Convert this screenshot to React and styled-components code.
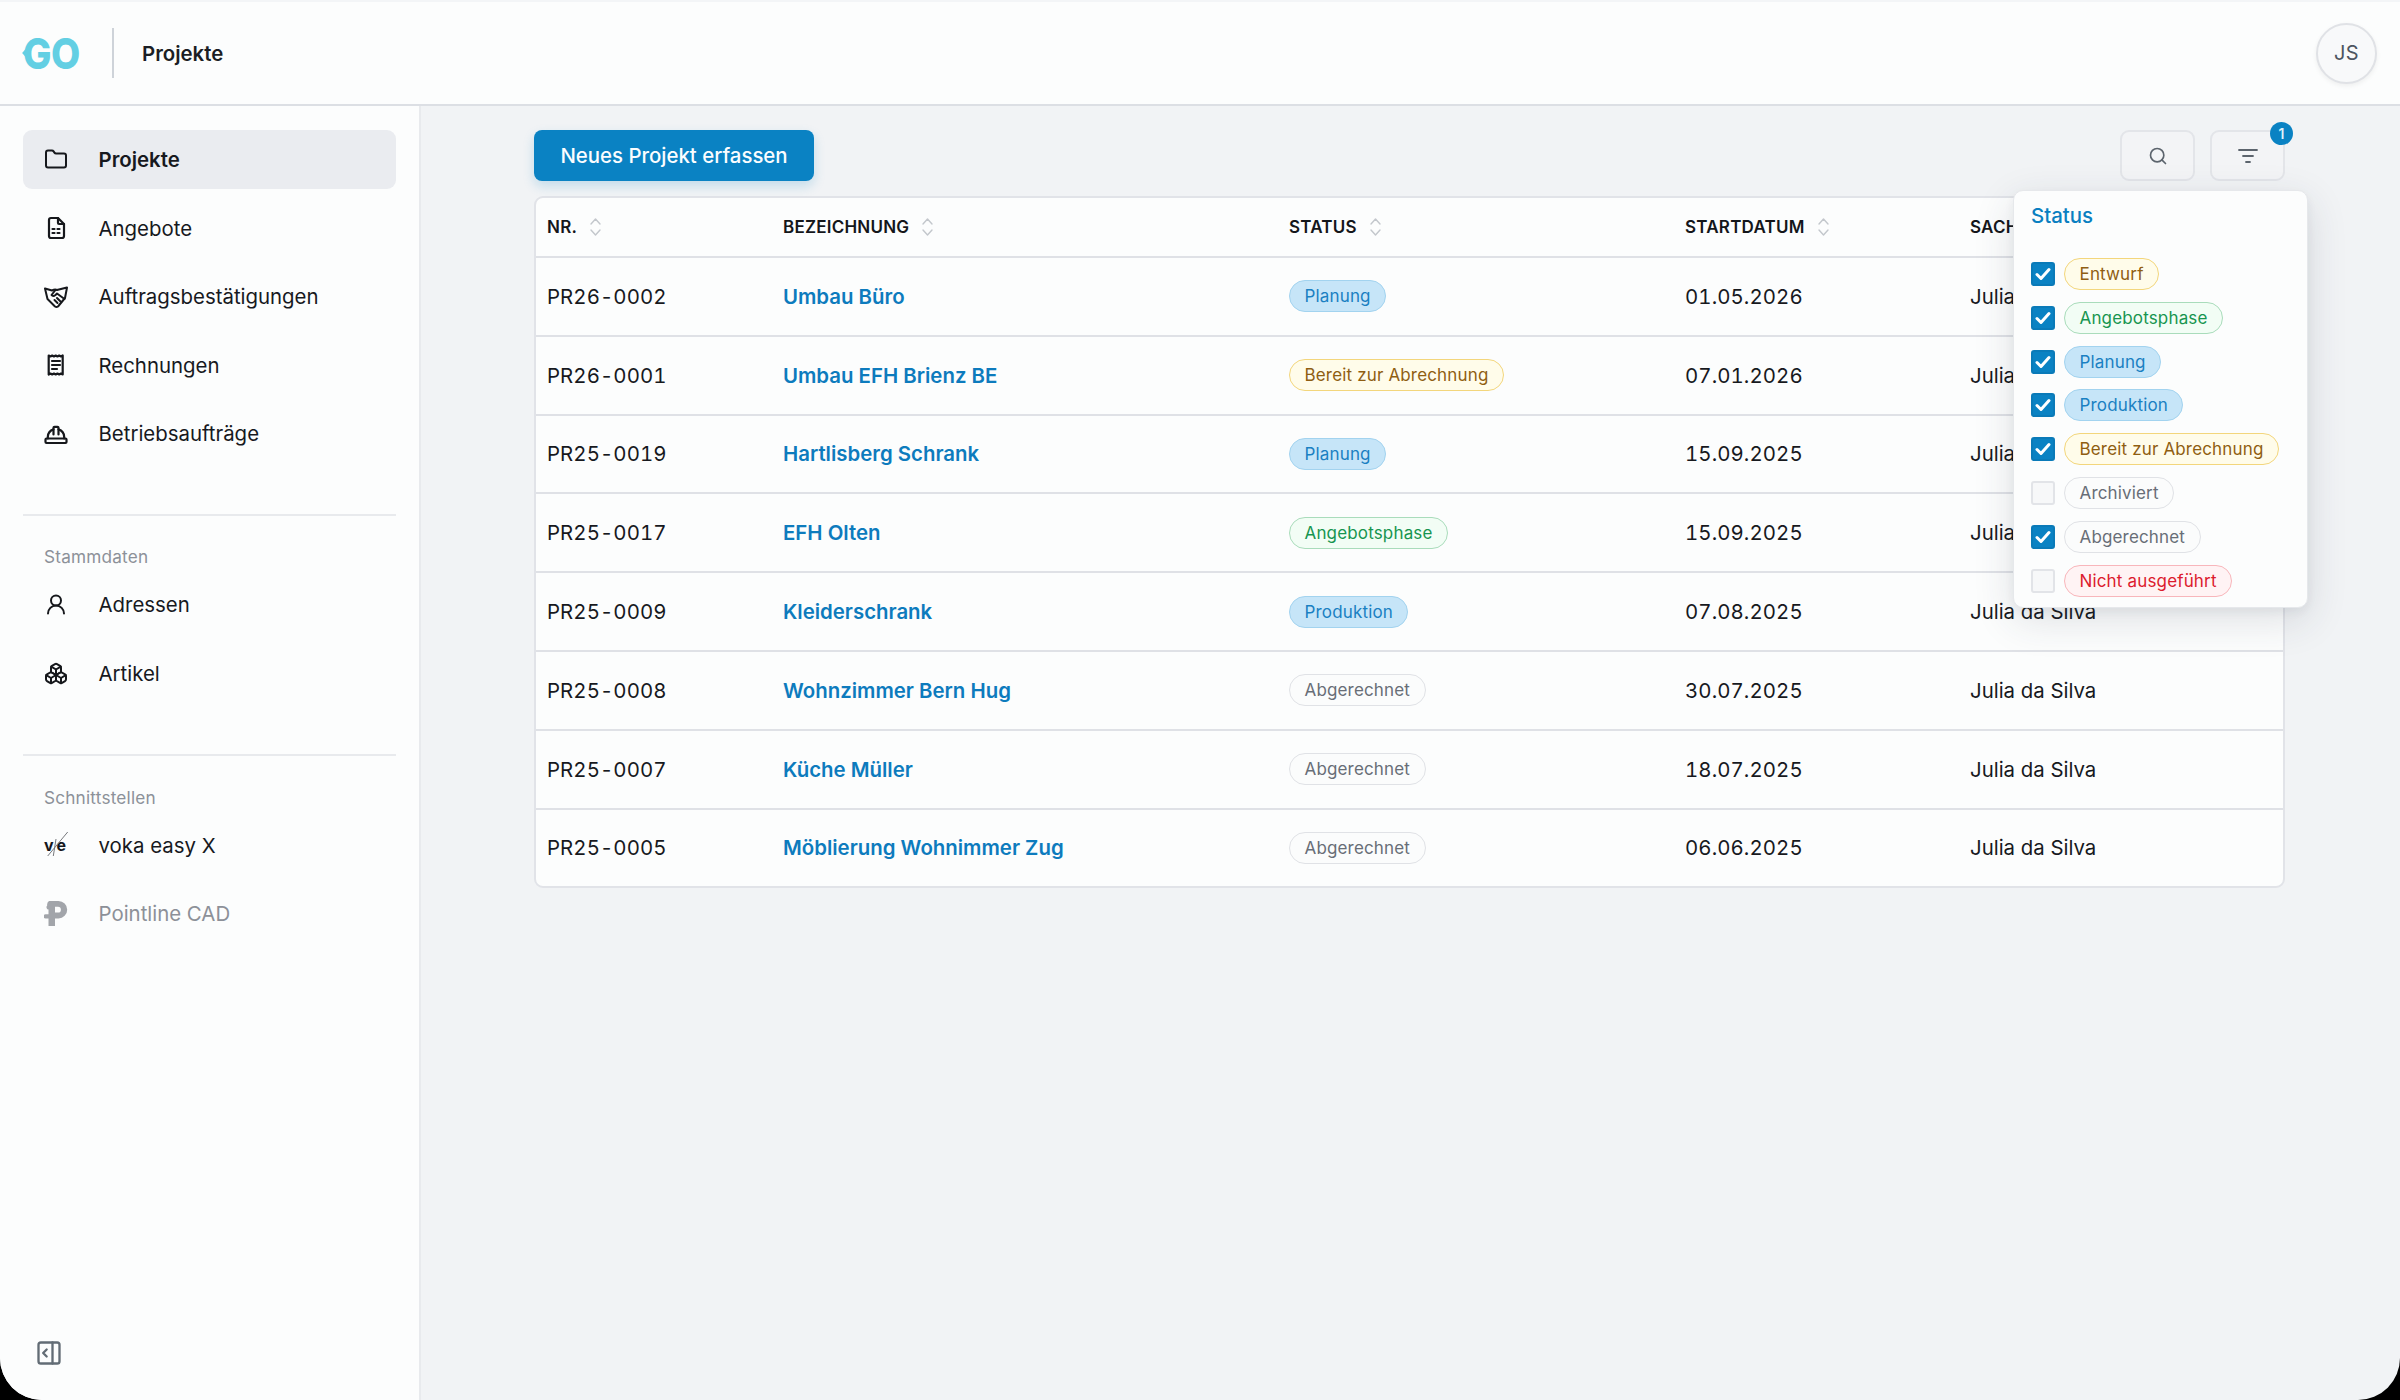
import React from 'react';
import styled, { createGlobalStyle } from 'styled-components';
import { Folder, Boxes, UserRound, Search, PanelRightOpen } from 'lucide-react';

const Global = createGlobalStyle`
  html, body { margin: 0; padding: 0; background: #000; }
  body { font-family: Inter, "Noto Sans", sans-serif; color: #111318; }
  * { box-sizing: border-box; }
`;

const Shell = styled.div`
  width: 2400px; height: 1400px; background: #f1f3f5;
  border-radius: 0 0 42px 42px; overflow: hidden;
  display: flex; flex-direction: column;
`;
const Header = styled.header`
  height: 106px; flex: none; background: #fcfdfd;
  border-top: 2px solid #f3f5f7; border-bottom: 2px solid #dcdfe4;
  display: flex; align-items: center; padding: 0 23px 0 23px;
`;
const Logo = styled.div`
  position: relative; width: 60px; font-size: 43px; line-height: 43px; font-weight: 800;
  letter-spacing: -.4px; color: #63cfe3; white-space: nowrap;
  transform: scaleX(.88); transform-origin: left center;
`;
const LogoNotch = styled.span`
  position: absolute; left: -1px; top: 17px; width: 0; height: 0;
  border-top: 4px solid transparent; border-bottom: 4px solid transparent; border-right: 4px solid #63cfe3;
`;
const HeaderRule = styled.div`
  width: 2px; height: 50px; background: #ced3d9; margin: 0 28px 0 29px;
`;
const HeaderTitle = styled.div`
  font-size: 20.4px; font-weight: 600; color: #1b1e24; flex: 1;
`;
const Avatar = styled.div`
  width: 61px; height: 61px; border-radius: 50%; background: #f8f9fa; border: 2px solid #e0e2e6;
  box-shadow: 0 2px 5px rgba(0,0,0,.06);
  display: flex; align-items: center; justify-content: center; font-size: 20px; color: #4d5560; letter-spacing: .5px;
`;
const Body = styled.div`
  flex: 1; display: flex; min-height: 0;
`;
const Sidebar = styled.aside`
  width: 421px; flex: none; background: #fcfdfd; border-right: 2px solid #e8eaed;
  padding: 24px 23px 0; display: flex; flex-direction: column;
`;
const NavList = styled.nav`
  display: flex; flex-direction: column; gap: 9.5px;
`;
const NavItem = styled.div`
  height: 59px; display: flex; align-items: center; padding-left: 21px; gap: 30.5px;
  border-radius: 9px; background: ${p => (p.$active ? '#eaecf0' : 'transparent')};
  font-size: 20.4px; font-weight: ${p => (p.$active ? 600 : 400)};
  color: ${p => (p.$muted ? '#8c9098' : '#17191e')};
`;
const NavIcon = styled.span`
  width: 24px; height: 24px; flex: none; display: flex; align-items: center; justify-content: center;
  color: ${p => (p.$muted ? '#a2a5aa' : '#16181c')};
`;
const VokaMark = styled.span`
  position: relative; width: 24px; height: 24px; padding-right: 2px; display: flex; align-items: center; justify-content: space-between;
  font-size: 16px; font-weight: 700; line-height: 24px; color: #16181c;
`;
const VokaSlash = styled.svg`
  position: absolute; left: 2px; top: -1px; width: 22px; height: 26px; overflow: visible;
`;
const Rule = styled.div`
  height: 2px; background: #e8eaed; margin-top: ${p => p.$top}px;
`;
const SectionLabel = styled.div`
  margin: ${p => p.$top}px 0 0 21px; font-size: 17.2px; line-height: 24px; color: #8c9199; letter-spacing: .2px; height: 30px;
`;
const Spacer = styled.div`flex: 1;`;
const Collapse = styled.div`
  padding: 0 0 33px 12px; display: flex; color: #626c75;
`;
const Main = styled.main`
  flex: 1; padding: 24px 115px 0 113px; min-width: 0;
`;
const Toolbar = styled.div`
  position: relative; display: flex; align-items: flex-start; height: 66px;
`;
const PrimaryButton = styled.button`
  height: 51px; width: 280px; border: none; border-radius: 8px; background: #0a82c3; color: #fbfdff;
  font: 500 20.4px Inter, sans-serif; box-shadow: 0 5px 12px rgba(10,130,195,.2);
`;
const ToolGroup = styled.div`
  margin-left: auto; display: flex; gap: 15px;
`;
const IconButton = styled.div`
  position: relative; width: 75px; height: 51px; border-radius: 9px; background: #f3f4f6; border: 2px solid #e3e5e9;
  display: flex; align-items: center; justify-content: center; color: #5c646d;
`;
const CountBadge = styled.span`
  position: absolute; right: -10px; top: -10px; width: 23px; height: 23px; border-radius: 50%;
  background: #0a82c3; color: #dff1fb; font-size: 14px; font-weight: 600;
  display: flex; align-items: center; justify-content: center;
`;
const Popover = styled.div`
  position: absolute; left: 1479px; top: 60px; width: 295px; height: 418px; z-index: 5;
  background: #fcfdfd; border: 1px solid #e6e8eb; border-radius: 10px;
  box-shadow: 0 12px 40px rgba(40,50,70,.14), 0 4px 10px rgba(40,50,70,.06);
  padding: 11px 16px 0 17px;
`;
const PopoverTitle = styled.div`
  font-size: 20.4px; line-height: 28px; font-weight: 500; color: #0a7fc1; margin-bottom: 28px;
`;
const CheckList = styled.div`
  display: flex; flex-direction: column; gap: 11.8px;
`;
const CheckRow = styled.div`
  height: 32px; display: flex; align-items: center; gap: 9px;
`;
const Box = styled.span`
  width: 24px; height: 24px; flex: none; border-radius: 3px;
  background: ${p => (p.$on ? '#0a82c3' : '#f7f8f9')}; border: 2px solid ${p => (p.$on ? '#0a7ab8' : '#e2e4e8')};
  display: flex; align-items: center; justify-content: center;
`;
const tones = {
  yellow: ['#fffcea', '#f3d67c', '#8f5e12'],
  green: ['#f2fdf5', '#a9dcbb', '#179550'],
  blue: ['#c6e5f8', '#a2d3ef', '#1a80c2'],
  gray: ['#fbfcfc', '#e0e2e6', '#686e77'],
  red: ['#fff3f4', '#f8b6bb', '#dc1b2e'],
};
const Pill = styled.span`
  height: 32px; display: inline-flex; align-items: center; padding: 0 14.5px; border-radius: 16px; white-space: nowrap;
  font-size: 17px; letter-spacing: .16px; border: 1.5px solid ${p => tones[p.$tone][1]};
  background: ${p => tones[p.$tone][0]}; color: ${p => tones[p.$tone][2]};
`;
const Table = styled.div`
  background: #fcfdfd; border: 2px solid #e1e3e8; border-radius: 9px; overflow: hidden;
`;
const columns = '236px 506px 396px 285px 1fr';
const HeadRow = styled.div`
  display: grid; grid-template-columns: ${columns}; height: 58px; align-items: center; padding-left: 11px;
  font-size: 17px; font-weight: 600; letter-spacing: .22px; color: #14161a; text-transform: uppercase;
`;
const HeadCell = styled.div`
  display: flex; align-items: center; gap: 12px; white-space: nowrap;
`;
const Row = styled.div`
  display: grid; grid-template-columns: ${columns}; height: 78.8px; align-items: center; padding-left: 11px;
  border-top: 2px solid #dfe1e6; font-size: 20.4px; color: #17191e;
`;
const Mono = styled.div`
  letter-spacing: .1px; font-variant-numeric: tabular-nums;
`;
const NameLink = styled.a`
  font-weight: 600; color: #0d7bbd;
`;
const Cell = styled.div`white-space: nowrap;`;

const Line = ({ children, w = 24, sw = 2.2 }) => (
  <svg width={w} height={w} viewBox="0 0 24 24" fill="none" stroke="currentColor" strokeWidth={sw} strokeLinecap="round" strokeLinejoin="round">{children}</svg>
);
const SheetIcon = () => (
  <Line>
    <path d="M7 2h7l6 6v12a2 2 0 0 1-2 2H7a2 2 0 0 1-2-2V4a2 2 0 0 1 2-2z" />
    <path d="M14 2v5a1 1 0 0 0 1 1h5" />
    <path d="M8.5 13h2M13.5 13h2M8.5 17h2M13.5 17h2" />
  </Line>
);
const HandshakeIcon = () => (
  <Line sw={2}>
    <path d="M1 3.5l7 2q3-1.5 5-.5l10-2.5-2 10.5-7 8.5q-1.5 1-3 0l-7.5-7.5z" />
    <path d="M11.5 5l-4 5q1.5 2 4 0l1.5-1.5 7.5 5.5" />
    <path d="M10.5 15l3 3M13 13l3.5 3.5" />
  </Line>
);
const ReceiptIcon = () => (
  <Line>
    <path d="M5 2.5l1.75 1 1.75-1 1.75 1 1.75-1 1.75 1 1.75-1 1.75 1 1.75-1v19l-1.75-1-1.75 1-1.75-1-1.75 1-1.75-1-1.75 1-1.75-1-1.75 1z" transform="translate(-.3 0)" />
    <path d="M8 8h8M8 12h8M8 16h5" />
  </Line>
);
const HatIcon = () => (
  <Line>
    <rect x="1.5" y="16.5" width="21" height="4.5" rx="1" />
    <path d="M3.8 16.5V15a8.2 8.2 0 0 1 5.7-7.6M20.2 16.5V15a8.2 8.2 0 0 0-5.7-7.6" />
    <path d="M9.5 12.5V5.8a1 1 0 0 1 1-1h3a1 1 0 0 1 1 1v6.7" />
  </Line>
);
const PointlineIcon = () => (
  <svg width="24" height="26" viewBox="0 0 24 26" fill="currentColor">
    <path fillRule="evenodd" d="M5 0h9.5a8.7 8.7 0 0 1 0 17.4H11V25H4.5v-7.6H1.5a1.8 1.8 0 0 1 0-4.2H4.5V8.6A2.5 2.5 0 0 1 3.2 4.4 4.5 4.5 0 0 1 5 0zM11 5.8v5.8h3a2.9 2.9 0 0 0 0-5.8z" />
  </svg>
);
const FilterIcon = () => (
  <Line sw={1.8}><path d="M3 6h18M7 12h10M10 18h4" /></Line>
);
const SortIcon = () => (
  <svg width="13" height="20" viewBox="0 0 13 20" fill="none" stroke="#c3c7cc" strokeWidth="1.4" strokeLinecap="round" strokeLinejoin="round">
    <path d="M2 7l4.5-5L11 7M2 13l4.5 5 4.5-5" />
  </svg>
);
const Tick = () => (
  <svg width="16" height="14" viewBox="0 0 16 14" fill="none" stroke="#fff" strokeWidth="3" strokeLinecap="round" strokeLinejoin="round">
    <path d="M2 7.5l4 4 8-9" />
  </svg>
);

const navMain = [
  ['Projekte', <Folder size={25} strokeWidth={2} />, true],
  ['Angebote', <SheetIcon />],
  ['Auftragsbestätigungen', <HandshakeIcon />],
  ['Rechnungen', <ReceiptIcon />],
  ['Betriebsaufträge', <HatIcon />],
];
const filters = [
  ['Entwurf', 'yellow', true], ['Angebotsphase', 'green', true], ['Planung', 'blue', true], ['Produktion', 'blue', true],
  ['Bereit zur Abrechnung', 'yellow', true], ['Archiviert', 'gray', false], ['Abgerechnet', 'gray', true], ['Nicht ausgeführt', 'red', false],
];
const rows = [
  ['PR26-0002', 'Umbau Büro', 'Planung', 'blue', '01.05.2026'],
  ['PR26-0001', 'Umbau EFH Brienz BE', 'Bereit zur Abrechnung', 'yellow', '07.01.2026'],
  ['PR25-0019', 'Hartlisberg Schrank', 'Planung', 'blue', '15.09.2025'],
  ['PR25-0017', 'EFH Olten', 'Angebotsphase', 'green', '15.09.2025'],
  ['PR25-0009', 'Kleiderschrank', 'Produktion', 'blue', '07.08.2025'],
  ['PR25-0008', 'Wohnzimmer Bern Hug', 'Abgerechnet', 'gray', '30.07.2025'],
  ['PR25-0007', 'Küche Müller', 'Abgerechnet', 'gray', '18.07.2025'],
  ['PR25-0005', 'Möblierung Wohnimmer Zug', 'Abgerechnet', 'gray', '06.06.2025'],
];
const heads = ['Nr.', 'Bezeichnung', 'Status', 'Startdatum', 'Sachbearbeiter'];

export default function App() {
  return (
    <>
      <Global />
      <Shell>
        <Header>
          <Logo><LogoNotch />GO</Logo>
          <HeaderRule />
          <HeaderTitle>Projekte</HeaderTitle>
          <Avatar>JS</Avatar>
        </Header>
        <Body>
          <Sidebar>
            <NavList>
              {navMain.map(([label, icon, active]) => (
                <NavItem key={label} $active={active}><NavIcon>{icon}</NavIcon>{label}</NavItem>
              ))}
            </NavList>
            <Rule $top={51} />
            <SectionLabel $top={29}>Stammdaten</SectionLabel>
            <NavList>
              <NavItem><NavIcon><UserRound size={25} strokeWidth={2} /></NavIcon>Adressen</NavItem>
              <NavItem><NavIcon><Boxes size={25} strokeWidth={2} /></NavIcon>Artikel</NavItem>
            </NavList>
            <Rule $top={51} />
            <SectionLabel $top={30}>Schnittstellen</SectionLabel>
            <NavList>
              <NavItem>
                <NavIcon>
                  <VokaMark>
                    <span>v</span><span>e</span>
                    <VokaSlash viewBox="0 0 22 26" fill="none" stroke="#77797d" strokeWidth="1"><path d="M1.7 24L21.7 0" /><path d="M7.3 24L10 7" /></VokaSlash>
                  </VokaMark>
                </NavIcon>
                voka easy X
              </NavItem>
              <NavItem $muted><NavIcon $muted><PointlineIcon /></NavIcon>Pointline CAD</NavItem>
            </NavList>
            <Spacer />
            <Collapse><PanelRightOpen size={28} strokeWidth={2} /></Collapse>
          </Sidebar>
          <Main>
            <Toolbar>
              <PrimaryButton>Neues Projekt erfassen</PrimaryButton>
              <ToolGroup>
                <IconButton><Search size={20} strokeWidth={2} /></IconButton>
                <IconButton><FilterIcon /><CountBadge>1</CountBadge></IconButton>
              </ToolGroup>
              <Popover>
                <PopoverTitle>Status</PopoverTitle>
                <CheckList>
                  {filters.map(([label, tone, on]) => (
                    <CheckRow key={label}>
                      <Box $on={on}>{on && <Tick />}</Box>
                      <Pill $tone={tone}>{label}</Pill>
                    </CheckRow>
                  ))}
                </CheckList>
              </Popover>
            </Toolbar>
            <Table>
              <HeadRow>
                {heads.map((h, i) => (
                  <HeadCell key={h}>{h}{i < 4 && <SortIcon />}</HeadCell>
                ))}
              </HeadRow>
              {rows.map(([nr, name, status, tone, date]) => (
                <Row key={nr}>
                  <Mono>{nr}</Mono>
                  <NameLink>{name}</NameLink>
                  <div><Pill $tone={tone}>{status}</Pill></div>
                  <Mono>{date}</Mono>
                  <Cell>Julia da Silva</Cell>
                </Row>
              ))}
            </Table>
          </Main>
        </Body>
      </Shell>
    </>
  );
}
